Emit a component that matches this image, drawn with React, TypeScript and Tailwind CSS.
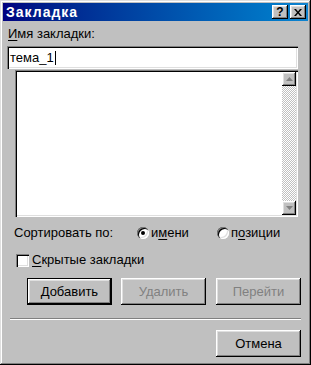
import React from "react";

const raised =
  "shadow-[inset_-1px_-1px_#000,inset_1px_1px_#fff,inset_-2px_-2px_#808080,inset_2px_2px_#dfdfdf]";
const sunken =
  "shadow-[inset_1px_1px_#808080,inset_2px_2px_#000,inset_-1px_-1px_#fff,inset_-2px_-2px_#dfdfdf]";

function U({ children }: { children: React.ReactNode }) {
  return <span className="underline underline-offset-[2px] decoration-1">{children}</span>;
}

function Btn({
  children,
  x,
  disabled,
  isDefault,
}: {
  children: React.ReactNode;
  x?: string;
  disabled?: boolean;
  isDefault?: boolean;
}) {
  return (
    <div
      className={
        "w-[85px] h-[27px] flex items-center justify-center bg-[#c0c0c0] " +
        (isDefault ? "border border-black " : "") +
        (x ?? "")
      }
    >
      <div
        className={
          "w-full h-full flex items-center justify-center " +
          raised +
          (disabled ? " text-[#808080]" : " text-black")
        }
      >
        {children}
      </div>
    </div>
  );
}

function Arrow({ up }: { up?: boolean }) {
  return (
    <div className={"w-[14px] h-[14px] bg-[#c0c0c0] flex items-center justify-center " + raised}>
      <svg width="7" height="4" viewBox="0 0 7 4">
        {up ? (
          <path d="M3.5 0 L7 4 L0 4 Z" fill="#808080" />
        ) : (
          <path d="M0 0 L7 0 L3.5 4 Z" fill="#808080" />
        )}
      </svg>
    </div>
  );
}

export default function App() {
  return (
    <div
      className="w-[311px] h-[365px] bg-[#c0c0c0] p-[3px] flex flex-col text-[13px] text-black shadow-[inset_-1px_-1px_#000,inset_1px_1px_#dfdfdf,inset_-2px_-2px_#808080,inset_2px_2px_#fff]"
      style={{ fontFamily: '"Liberation Sans", Arial, sans-serif' }}
    >
      {/* Title bar */}
      <div className="h-[18px] flex items-center bg-gradient-to-r from-[#000080] to-[#1084d0] pl-[3px] pr-[2px]">
        <span className="text-white font-bold text-[14px] tracking-[1px] leading-none">Закладка</span>
        <div className="ml-auto flex">
          <div className={"w-[16px] h-[14px] bg-[#c0c0c0] flex items-center justify-center " + raised}>
            <span className="font-bold text-[12px] leading-none">?</span>
          </div>
          <div className={"ml-[2px] w-[16px] h-[14px] bg-[#c0c0c0] flex items-center justify-center " + raised}>
            <svg width="8" height="7" viewBox="0 0 8 7">
              <path d="M0 0h2l2 2.5 2-2.5h2L5 3.5 8 7H6L4 4.5 2 7H0l3-3.5z" fill="#000" />
            </svg>
          </div>
        </div>
      </div>

      {/* Label */}
      <div className="pt-[6px] pl-[5px] h-[25px] leading-[14px]">
        <U>И</U>мя закладки:
      </div>

      {/* Input */}
      <div className={"ml-[4px] w-[291px] h-[23px] bg-white flex items-center pl-[3px] " + sunken}>
        <span>тема_1</span>
        <span className="ml-[1px] w-[1px] h-[14px] bg-black" />
      </div>

      {/* Listbox */}
      <div className={"mt-[1px] ml-[12px] w-[283px] h-[147px] bg-white p-[2px] flex justify-end " + sunken}>
        <div className="w-[14px] h-full flex flex-col">
          <Arrow up />
          <div className="flex-1 bg-[image:repeating-conic-gradient(#c0c0c0_0%_25%,#fff_0%_50%)] bg-[length:2px_2px]" />
          <Arrow />
        </div>
      </div>

      {/* Sort row */}
      <div className="mt-[8px] h-[16px] flex items-center">
        <span className="ml-[11px] w-[123px]">Сортировать по:</span>
        <div className="w-[80px] flex items-center">
          <div className={"w-[12px] h-[12px] rounded-full bg-white flex items-center justify-center " + sunken}>
            <div className="w-[4px] h-[4px] rounded-full bg-black" />
          </div>
          <span className="ml-[2px]">
            и<U>м</U>ени
          </span>
        </div>
        <div className="flex items-center">
          <div className={"w-[12px] h-[12px] rounded-full bg-white " + sunken} />
          <span className="ml-[2px]">
            п<U>о</U>зиции
          </span>
        </div>
      </div>

      {/* Checkbox row */}
      <div className="mt-[11px] h-[16px] flex items-center">
        <div className={"ml-[13px] w-[13px] h-[13px] bg-white " + sunken} />
        <span className="ml-[3px]">
          <U>С</U>крытые закладки
        </span>
      </div>

      {/* Buttons */}
      <div className="mt-[10px] flex">
        <Btn x="ml-[24px]" isDefault>
          <U>Д</U>обавить
        </Btn>
        <Btn x="ml-[9px]" disabled>
          Удалить
        </Btn>
        <Btn x="ml-[10px]" disabled>
          Перейти
        </Btn>
      </div>

      {/* Separator */}
      <div className="mt-[13px] ml-[7px] w-[291px] h-[2px] border-t border-t-[#808080] border-b border-b-white" />

      {/* Cancel */}
      <div className="mt-[10px] flex">
        <Btn x="ml-[213px]">Отмена</Btn>
      </div>
    </div>
  );
}
